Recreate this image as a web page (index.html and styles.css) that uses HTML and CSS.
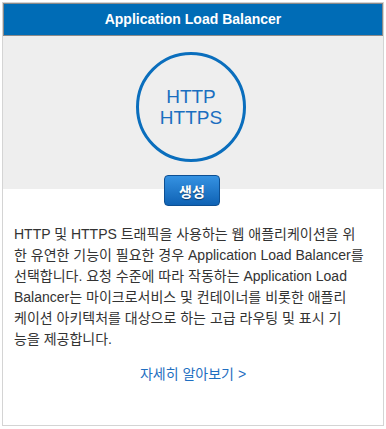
FILE: index.html
```html
<!DOCTYPE html>
<html lang="ko">
<head>
<meta charset="utf-8">
<link rel="stylesheet" href="styles.css">
</head>
<body>
<div class="card">
  <div class="card-header">Application Load Balancer</div>
  <div class="hero">
    <div class="circle"><span>HTTP<br>HTTPS</span></div>
    <button class="btn">생성</button>
  </div>
  <p class="desc">HTTP 및 HTTPS 트래픽을 사용하는 웹 애플리케이션을 위<br>한 유연한 기능이 필요한 경우 Application Load Balancer를<br>선택합니다. 요청 수준에 따라 작동하는 Application Load<br>Balancer는 마이크로서비스 및 컨테이너를 비롯한 애플리<br>케이션 아키텍처를 대상으로 하는 고급 라우팅 및 표시 기<br>능을 제공합니다.</p>
  <div class="more"><a href="#">자세히 알아보기 &gt;</a></div>
</div>
</body>
</html>
```

FILE: styles.css
```css
html, body {
  margin: 0;
  padding: 0;
  background: #ffffff;
}
body {
  padding: 2px;
  font-family: "Liberation Sans", Arial, "Noto Sans CJK KR", sans-serif;
  font-size: 14px;
  color: #333333;
}
.card {
  width: 380px;
  height: 422px;
  border: 1px solid #d4d4d4;
  background: #ffffff;
  box-sizing: content-box;
}
.card-header {
  height: 31px;
  line-height: 31px;
  border: 1px solid #8a8a8a;
  background: #006cb6;
  color: #ffffff;
  font-weight: bold;
  font-size: 14px;
  text-align: center;
}
.hero {
  background: #eeeeee;
  padding-top: 16px;
  display: flex;
  flex-direction: column;
  align-items: center;
}
.circle {
  width: 104px;
  height: 104px;
  border: 3px solid #0a6ebd;
  border-radius: 50%;
  display: flex;
  align-items: center;
  justify-content: center;
  text-align: center;
  color: #1a6ec0;
  font-size: 19px;
  line-height: 21px;
  margin-left: -4px;
}
.btn {
  margin-top: 13px;
  margin-bottom: -17px;
  width: 56px;
  height: 31px;
  padding: 0;
  border: 1px solid #0d4f92;
  border-radius: 4px;
  background: linear-gradient(#3592e2, #0f62b4);
  color: #ffffff;
  font-family: "Noto Sans CJK KR", sans-serif;
  font-weight: bold;
  font-size: 14px;
  text-shadow: 0 1px 1px rgba(0, 0, 0, 0.45);
  position: relative;
  margin-left: -2px;
}
.desc {
  margin: 35px 0 0;
  padding: 0 11px;
  line-height: 21px;
  white-space: nowrap;
}
.more {
  margin-top: 14px;
  text-align: center;
  line-height: 21px;
}
.more a {
  color: #1f6fc1;
  text-decoration: none;
}
```
